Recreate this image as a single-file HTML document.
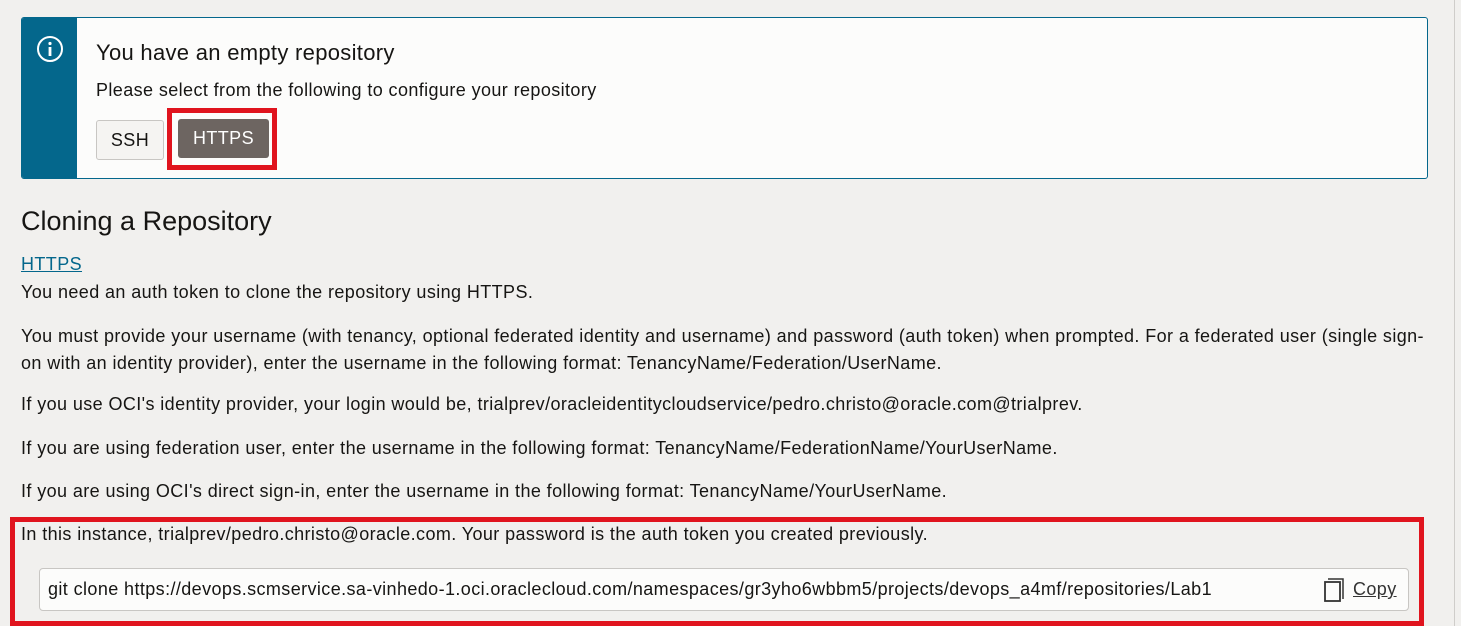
<html><head><style>
body{margin:0;width:1461px;height:626px;background:#f1f0ee;font-family:"Liberation Sans",sans-serif;color:#161513;position:relative;overflow:hidden}
.abs{position:absolute}
.t{font-size:18px;letter-spacing:0.4px}
</style></head><body>
<div class="abs" style="left:1454px;top:0;width:1px;height:626px;background:#cfcdca"></div>
<div class="abs" style="left:21px;top:17px;width:1405px;height:160px;border:1px solid #04678c;border-radius:3px;background:#fcfcfb;overflow:hidden">
 <div class="abs" style="left:0;top:0;width:55px;height:160px;background:#04678c"></div>
 <svg class="abs" style="left:14px;top:17px" width="28" height="28" viewBox="0 0 28 28"><circle cx="14" cy="14" r="12" fill="none" stroke="#fff" stroke-width="2"/><circle cx="14" cy="8.5" r="1.6" fill="#fff"/><rect x="12.6" y="12" width="2.8" height="9" fill="#fff"/></svg>
 <div class="abs" style="left:74px;top:22px;font-size:22px;letter-spacing:0.3px">You have an empty repository</div>
 <div class="abs t" style="left:74px;top:62px">Please select from the following to configure your repository</div>
 <div class="abs t" style="left:74px;top:102px;width:66px;height:38px;border:1px solid #c8c6c3;border-radius:3px;background:#f5f4f2;line-height:38px;text-align:center">SSH</div>
 <div class="abs" style="left:145px;top:90px;width:110px;height:62px;border:5px solid #e0141e;box-sizing:border-box"></div>
 <div class="abs t" style="left:156px;top:101px;width:91px;height:39px;border-radius:3px;background:#6d6561;color:#fff;line-height:39px;text-align:center">HTTPS</div>
</div>
<div class="abs" style="left:21px;top:206px;font-size:27px">Cloning a Repository</div>
<div class="abs t" style="left:21px;top:254px;color:#04678c;text-decoration:underline">HTTPS</div>
<div class="abs t" style="left:21px;top:282px">You need an auth token to clone the repository using HTTPS.</div>
<div class="abs t" style="left:21px;top:323px;width:1415px;line-height:27px">You must provide your username (with tenancy, optional federated identity and username) and password (auth token) when prompted. For a federated user (single sign-on with an identity provider), enter the username in the following format: TenancyName/Federation/UserName.</div>
<div class="abs t" style="left:21px;top:394px">If you use OCI's identity provider, your login would be, trialprev/oracleidentitycloudservice/pedro.christo@oracle.com@trialprev.</div>
<div class="abs t" style="left:21px;top:438px">If you are using federation user, enter the username in the following format: TenancyName/FederationName/YourUserName.</div>
<div class="abs t" style="left:21px;top:481px">If you are using OCI's direct sign-in, enter the username in the following format: TenancyName/YourUserName.</div>
<div class="abs" style="left:10px;top:517px;width:1414px;height:109px;border:5px solid #e0141e;box-sizing:border-box"></div>
<div class="abs t" style="left:21px;top:524px">In this instance, trialprev/pedro.christo@oracle.com. Your password is the auth token you created previously.</div>
<div class="abs" style="left:39px;top:568px;width:1368px;height:41px;border:1px solid #c8c6c3;border-radius:4px;background:#fcfcfb">
 <div class="abs t" style="left:8px;top:10px">git clone https://devops.scmservice.sa-vinhedo-1.oci.oraclecloud.com/namespaces/gr3yho6wbbm5/projects/devops_a4mf/repositories/Lab1</div>
 <svg class="abs" style="left:1283px;top:8px" width="22" height="26" viewBox="0 0 22 26"><path d="M5 2H20V22" fill="none" stroke="#333" stroke-width="1.5"/><rect x="2" y="5" width="15" height="19" fill="none" stroke="#333" stroke-width="1.8"/></svg>
 <div class="abs t" style="left:1313px;top:10px;color:#333;text-decoration:underline">Copy</div>
</div>
</body></html>
